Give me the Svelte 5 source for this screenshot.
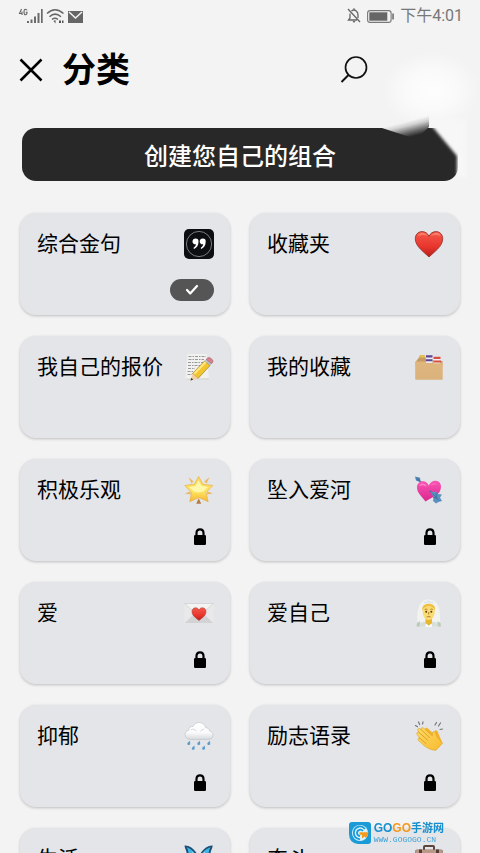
<script lang="ts">
	type Card = { label: string; icon: string; state?: 'selected' | 'locked' };

	const cards: Card[] = [
		{ label: '综合金句', icon: 'quote', state: 'selected' },
		{ label: '收藏夹', icon: 'heart' },
		{ label: '我自己的报价', icon: 'memo' },
		{ label: '我的收藏', icon: 'dividers' },
		{ label: '积极乐观', icon: 'star', state: 'locked' },
		{ label: '坠入爱河', icon: 'cupid', state: 'locked' },
		{ label: '爱', icon: 'letter', state: 'locked' },
		{ label: '爱自己', icon: 'person', state: 'locked' },
		{ label: '抑郁', icon: 'rain', state: 'locked' },
		{ label: '励志语录', icon: 'clap', state: 'locked' },
		{ label: '生活', icon: 'butterfly', state: 'locked' },
		{ label: '奋斗', icon: 'briefcase', state: 'locked' }
	];
</script>

{#snippet icon(name: string)}
	<svg class="icon" viewBox="0 0 30 30" aria-hidden="true">
		{#if name === 'quote'}
			<rect width="30" height="30" rx="5" fill="#0d0e12" />
			<circle cx="15" cy="15" r="12.6" fill="none" stroke="#a9a9ad" stroke-width=".7" />
			<path fill="#fff" d="M11.5 9.5a3 3 0 0 1 3 3.2c0 3.6-1.7 6-4.4 7.3l-.7-1.1c1.6-1 2.4-2.1 2.6-3.6-2 .3-3.5-.9-3.5-2.8 0-1.7 1.3-3 3-3z" />
			<path fill="#fff" d="M18.7 9.5a3 3 0 0 1 3 3.2c0 3.6-1.7 6-4.4 7.3l-.7-1.1c1.6-1 2.4-2.1 2.6-3.6-2 .3-3.5-.9-3.5-2.8 0-1.7 1.3-3 3-3z" />
		{:else if name === 'heart'}
			<path fill="url(#red)" stroke="#8e2a22" stroke-width=".8" d="M15 28C10 23 1.300 17.500 1.300 9.800c0-4.300 2.900-7.200 6.600-7.200 3.300 0 5.900 1.800 7.100 4.700 1.200-2.900 3.800-4.700 7.100-4.700 3.700 0 6.600 2.900 6.600 7.200C28.700 17.500 20 23 15 28z" />
			<path fill="#ff8b78" opacity=".7" d="M3.500 7.500C4.500 4.500 6.500 3.500 9 3.800c2.500.4 4 2 4.500 3.200-3-1.500-6.500-1.500-10 .5zM17 7c1-2 3-3.300 5.500-3.200 2 .1 3.800 1.400 4.300 3.500C24 5.800 20.500 5.600 17 7z" />
		{:else if name === 'memo'}
			<path fill="#f1f1ef" d="M3.500 2H23l2 26H1.500z" />
			<path fill="#dcdcda" d="M1.600 26.500 25 26l.2 2H1.500z" />
			<path stroke="#98989c" stroke-width="1" stroke-dasharray="3 1 1.500 1" fill="none" d="M4.500 4.500H22M4.500 7.500H20M4 10.500H19M4 13.500H16M4 16.500H11M3.500 19.500H9M3.500 22.500H8" />
			<path fill="#f3c52d" stroke="#8c6b18" stroke-width=".6" d="m8.500 21.500 12-12.500 5.500 4.500-12 13z" />
			<path fill="#ffe882" d="m9.500 21 11.500-11.800 1.600 1.300L11 22.500z" />
			<path fill="#f0cfa0" d="m8.500 21.500 5.500 5-7.500 2z" />
			<path fill="#3b3326" d="m7.300 25.800 1.800 2-2.600.7z" />
			<path fill="#b9bcc0" d="m20.500 9 1.700-1.800 5.400 4.500L26 13.500z" />
			<path fill="#d9808a" stroke="#96545c" stroke-width=".5" d="m22.200 7.200 1.600-1.500c2-.9 5.900 2.200 5.100 4.300l-1.300 1.700z" />
		{:else if name === 'dividers'}
			<path fill="#c69a60" d="M1.500 10 5 5.500l1-2.300h4.500L12 7l16.500 2v5h-27z" />
			<path fill="#e6c14e" d="M6 3.200h4.500l.6 2.300H5.300z" />
			<path fill="#f0eef5" d="M12 3.200h6.500V11H12zM19.500 4.500h7V12h-7z" />
			<path fill="#5a4694" d="M12 3.200h6.500v2.300H12zM12 7.300h6.500v2H12z" />
			<path fill="#d8503c" d="M19.500 4.700h7v2.300h-7zM19.500 8.500h7.500v2h-7.500z" />
			<path fill="url(#tan)" d="M1.200 9.500h10l2 1.800h15.500V27q0 .7-.7.7H2q-.8 0-.8-.7z" />
		{:else if name === 'star'}
			<path fill="#edb75a" d="m4.500 2 5 4.500-2 2zM25.500 2l-5.200 4.500 2.200 2zM.8 18.500l5.500-2 .5 3zM28.900 18.500l-5.500-2-.5 3z" />
			<path fill="#b77b42" d="m14.700 23.200 2.500 5.500h-5z" />
			<path fill="url(#gold)" stroke="#e5a83a" stroke-width=".6" stroke-linejoin="round" d="m14.600 1.500 4.400 7.800 9.800 1.200-6.800 7 2.200 9.200-9.400-4.200-9 4.200 1.700-9.300L.8 10.500l9.700-1.400z" />
			<path fill="#fff9b4" opacity=".9" d="m14.500 5.500 3.200 5.500 6.300 1-5 4.500-4.300 1-4.800-1-5-4.500 6.700-1z" />
		{:else if name === 'cupid'}
			<path fill="#4d86b8" d="m1 1.500 5 1.300.6 4.500L2 5.500z" />
			<path stroke="#4b7298" stroke-width="1.400" d="M3 3.500 24 23.500" />
			<path fill="url(#pink)" d="M11.500 26.500C8 21.500 2.500 18 3 11.500 3.500 7.500 7.300 5.300 10.700 6.500c2 .7 3.400 2 4 4 1.800-3.800 5.300-5.500 8.500-4.400 3.300 1.100 4.600 4.900 3.300 8.700C24.500 21 16.500 23 11.500 26.500z" />
			<path fill="#ff94d0" opacity=".8" d="M5 11c1-2.300 3-3.200 5.500-2 1.200.7 2 1.700 2.300 2.800C10.500 10 8 9.700 5 11zM16.500 10.800c1.500-2.300 4.500-3 6.800-1.300-2.500-.4-4.800.1-6.800 1.300z" />
			<path stroke="#4b7298" stroke-width="1.200" d="m15.500 15.500 8 8" />
			<path fill="#5a91c0" d="m17 17 5-.5 1.500 2.500 4.500.5-2 2.900L28 26l-3.500 1-2.500 1.500-3-2.500.5-3.500z" />
			<path stroke="#345f8e" stroke-width=".6" fill="none" d="m18.500 18.500 6.500 7M22 18l.5 4.500M19 22.500l4 .5" />
		{:else if name === 'letter'}
			<path fill="#e9e9ea" d="M.7 5.500h28.600V25H.7z" />
			<path fill="#d3d3d6" d="m.7 25 10.500-10h7.600l10.500 10z" />
			<path fill="#f4f4f4" stroke="#c8c8ca" stroke-width=".6" d="M.7 5.500h28.600L15 18.500z" />
			<path fill="url(#red)" stroke="#a73d34" stroke-width=".5" d="M15 22.500c-3.500-3-7-5-7-8.800 0-2.400 1.500-4 3.600-4 1.600 0 2.800.9 3.400 2.300.6-1.400 1.800-2.300 3.400-2.300 2.100 0 3.600 1.600 3.600 4 0 3.800-3.500 5.800-7 8.800z" />
		{:else if name === 'person'}
			<path fill="#f2f3ef" d="M3.500 27C2.500 12 4.500 1.500 14.500 1.500S27 12 25.800 27z" />
			<path fill="#d7dfda" d="M2.500 28.500C3 25 8 23.500 14.700 23.500S26 25 26.800 28.500z" />
			<path fill="#bccbb9" d="m3 25 3-2-.5 5.500H2.500zM26.500 25l-3-2 .5 5.500h3z" />
			<path fill="#e8b72f" d="M11.500 19h6.500v6.500l-3.300 2-3.200-2z" />
			<ellipse cx="14.700" cy="14.500" rx="6" ry="7.500" fill="#f9dc74" />
			<path fill="#f0bf3f" d="M8.400 13C7.500 8 10.500 5.700 14.700 5.700S21.900 8 21 13c-.8-3-3.300-4.500-6.300-5.200C11.700 8.500 9.200 10 8.400 13z" />
			<path fill="#d9e3ee" d="m9.500 5.500 1.200-2.100L12.500 4l2.200-2 2.100 2 1.900-.6 1.200 2.100-5.200-.9z" />
			<circle cx="12.200" cy="13.700" r="1" fill="#54401c" />
			<circle cx="17.300" cy="13.700" r="1" fill="#54401c" />
			<path stroke="#a26b16" stroke-width=".8" fill="none" d="M10.700 11.500q1.500-.9 2.700 0M16.200 11.500q1.500-.9 2.700 0M14.700 14v2.500M12.700 19q2-1 4 0" />
			<path fill="#fff" d="M12 25.500 14.700 28l2.800-2.500.5 3.200h-6.500z" />
		{:else if name === 'rain'}
			<path fill="url(#cloud)" stroke="#c0c6cc" stroke-width=".7" d="M6.500 18.500C3.500 18.500 1 16.500 1 13.700c0-2.400 1.500-4 3.700-4.500C4.500 6.500 6.800 5 9 5.500 10.200 2.700 12.500 1.500 15.200 1.500c3.600 0 6 2.300 6.500 5.200 2.200.1 3.700 1.400 4 3.300 2 .6 3.300 2 3.300 4.200 0 2.700-2.300 4.300-5.300 4.300z" />
			<path stroke="#c9ced3" stroke-width=".8" fill="none" d="M7 8.700c1.700-1 4-.6 5.200 1.500M20 8q-2.500.3-3.300 2.500" />
			<g fill="#5a9dcc">
				<path d="M6 19.800c-.8 1.200-3 1.500-2.700 3.200.3 1.300 2.500 1.200 2.900 0z" />
				<path d="M16 19.800c-.8 1.200-3 1.500-2.700 3.200.3 1.300 2.500 1.200 2.900 0z" />
				<path d="M26 19.800c-.8 1.200-3 1.500-2.700 3.200.3 1.300 2.500 1.200 2.900 0z" />
				<path d="M10.500 24.500c-.8 1.200-3 1.500-2.700 3.200.3 1.300 2.500 1.200 2.900 0z" />
				<path d="M20.800 24.500c-.8 1.200-3 1.500-2.700 3.200.3 1.300 2.500 1.200 2.900 0z" />
			</g>
		{:else if name === 'clap'}
			<path stroke="#74767b" stroke-width="1.200" stroke-linecap="round" d="m1.500 4.500 2 1.200M4.500 1l1.200 2.500M9 .8 8.500 3M21 4 22.500 1.500M24.500 5l2-3M26 8.500l2.500-.5" />
			<path fill="#f3b229" d="M11 7.500c1-1.300 2.600-.4 3.500.6l6 5.400c.5-1.300-.7-3.300 1-4.200 1.800-.3 2.500 1.700 3.500 4.700l3.500 8-6.500 6.500-8-7z" />
			<path fill="url(#skin)" stroke="#dba025" stroke-width=".6" d="M3 13.500c-1-1.500.8-3 2-2L4 9.500C3.200 8 5 6.700 6.300 7.800L7 8.500C6.700 6.700 8.500 6 9.700 7.200l8.600 7.700c.5-1.500-.5-4.100 1.400-4.500 1.700 0 2.300 2.500 3 5l5.800 6.800-6.500 7.100c-4 0-8.500-1.800-12-4.800L4.500 19.500c-1.500-1.400.2-3 1.500-2.200z" />
			<path stroke="#d5951d" stroke-width=".8" stroke-linecap="round" fill="none" d="m5 11.500 8.500 7.500M7 8.500l8.500 8M5.500 17l6.500 5.500" />
		{:else if name === 'butterfly'}
			<path fill="#1d4f75" d="M14.500 13C12 6 6 1 .5 1.500c.2 3 2 5 2.200 8 .3 4 3.200 6.500 7 7L7 22l5 5 2.500-7 2.500 7 5-5-2.500-5.500c4-.5 6.700-3 7-7 .2-3 2-5 2.200-8C23.500 1 17.500 6 14.500 13z" />
			<path fill="#41b5e4" d="M13 13C10.500 8 7 4.500 2.700 3.200c1.300 2 1.600 4 1.800 6.200.4 3 3 4.700 6.500 5.100zM16 13c2.500-5 6-8.500 10.500-9.800-1.300 2-1.600 4-1.800 6.200-.4 3-3 4.700-6.500 5.100zM12 17l-3 4.700 3 2.600zM17 17l3 4.700-3 2.600z" />
			<path fill="#92e1f5" d="M8 7.500c2 2 3.200 3.600 4 5.500-3-1-4.500-2.500-4-5.500zM21 7.500c-2 2-3.200 3.600-4 5.500 3-1 4.500-2.500 4-5.500z" />
		{:else}
			<path stroke="#5a443b" stroke-width="2" fill="none" d="M10 6V3q0-1 1-1h8q1 0 1 1v3" />
			<rect x="1" y="5.500" width="28" height="22" rx="2" fill="#97796b" />
			<path fill="#b99a89" d="M1.500 8q0-2 2-2h23q2 0 2 2v1h-27z" />
			<path fill="#513e37" d="M5 5.500h3V9H5zM22 5.500h3V9h-3zM1 14h28v1.500H1z" />
		{/if}
	</svg>
{/snippet}

<svg class="defs" aria-hidden="true">
	<defs>
		<linearGradient id="red" x2="0" y2="1"><stop stop-color="#f4594a" /><stop offset=".6" stop-color="#e8352d" /><stop offset="1" stop-color="#b81f1c" /></linearGradient>
		<linearGradient id="pink" x2="0" y2="1"><stop stop-color="#fb55b4" /><stop offset="1" stop-color="#d9268e" /></linearGradient>
		<linearGradient id="gold" x2="0" y2="1"><stop stop-color="#fbd85c" /><stop offset=".6" stop-color="#fde45f" /><stop offset="1" stop-color="#f5b435" /></linearGradient>
		<linearGradient id="tan" x2="0" y2="1"><stop stop-color="#e0b67e" /><stop offset="1" stop-color="#dbb27c" /></linearGradient>
		<linearGradient id="cloud" x2="0" y2="1"><stop stop-color="#fff" /><stop offset=".6" stop-color="#fafafa" /><stop offset="1" stop-color="#d5d8dc" /></linearGradient>
		<linearGradient id="skin" x2="1" y2="1"><stop stop-color="#ffda65" /><stop offset="1" stop-color="#f7bb2e" /></linearGradient>
	</defs>
</svg>

<main class="screen">
	<div class="status">
		<svg width="68" height="17" viewBox="0 0 68 17" aria-label="4G">
			<path fill="none" stroke="#666" stroke-width="1.1" d="M3.500 1 1.500 5.500h3M4 3.500V7M9 2.300Q8.700 1.200 7.500 1.200 6 1.200 6 4t1.500 2.800Q9 6.800 9 4.300H7.700" />
			<path fill="#6a6a6a" d="M9 13h2v2H9zM12.500 11.500h2V15h-2zM16 8.500h2V15h-2zM19.500 5h2v10h-2zM23 1h1.700v14H23z" />
			<path fill="none" stroke="#666" stroke-width="1.500" d="M29 5.500Q37-2 45.500 5.500M31.500 8.700Q37 3.500 43 8.700M34 11.500q3-2.500 6 0" />
			<path fill="#555" d="m35.500 13 2-1v3.500zM41 12.500h2V15h-2zM44 12.500h1.500V15H44z" />
			<path fill="#666" d="M50 3h15v12H50z" />
			<path fill="none" stroke="#f3f3f3" stroke-width="1.500" d="m51 4 6.500 6L64 4" />
		</svg>
		<div class="status-group">
			<svg width="14" height="16" viewBox="0 0 14 16" aria-label="静音">
				<path fill="none" stroke="#666" stroke-width="1.300" d="m1 1 12 13M4.500 3Q7 1 9.500 3.200 11 4.500 11 7v3M3 5.500V10l-1.500 2H10M7 .3v2" />
				<path fill="#666" d="M5.500 13h3L7 15z" />
			</svg>
			<svg width="27" height="13" viewBox="0 0 27 13" aria-label="电量">
				<rect x=".6" y=".6" width="23.500" height="11.800" rx="2.500" fill="none" stroke="#777" stroke-width="1.100" />
				<rect x="2.300" y="2.300" width="18" height="8.400" fill="#666" />
				<path fill="#666" d="M25.300 3.500h1.500v6h-1.500z" />
			</svg>
			<span class="time">下午4:01</span>
		</div>
	</div>

	<header class="header">
		<button class="plain" aria-label="关闭">
			<svg width="24" height="24" viewBox="0 0 24 24">
				<path stroke="#000" stroke-width="2.500" d="M1.500 1.500 22.500 22.500M22.500 1.500 1.500 22.500" />
			</svg>
		</button>
		<h1>分类</h1>
		<button class="plain search" aria-label="搜索">
			<svg width="28" height="28" viewBox="0 0 28 28">
				<circle cx="16" cy="11.500" r="10.500" fill="none" stroke="#111" stroke-width="1.700" />
				<path stroke="#111" stroke-width="2" d="M8.500 19 1.500 26" />
			</svg>
		</button>
	</header>

	<div class="create-wrap">
		<button class="create">创建您自己的组合</button>
		<!-- soft highlight folded over the right corner -->
		<svg class="glow" viewBox="382 52 98 130" aria-hidden="true">
			<defs>
				<filter id="soft" x="-20%" y="-20%" width="140%" height="140%"><feGaussianBlur stdDeviation="1.500" /></filter>
				<radialGradient id="halo">
					<stop stop-color="#fdfdfd" />
					<stop offset=".5" stop-color="#fafafa" />
					<stop offset="1" stop-color="#f3f3f3" />
				</radialGradient>
				<linearGradient id="fade" gradientUnits="userSpaceOnUse" x1="406" y1="121" x2="410" y2="137">
					<stop stop-color="#f8f8f8" />
					<stop offset=".3" stop-color="#d0d0d0" />
					<stop offset=".7" stop-color="#6a6a6a" />
					<stop offset="1" stop-color="#282828" />
				</linearGradient>
			</defs>
			<path fill="url(#halo)" d="M382 52h98v76h-98z" />
			<path fill="#f7f7f7" filter="url(#soft)" d="M431 125 457 156 457 175 466 178 466 120 431 118z" />
			<path fill="url(#fade)" d="M382 128 429 115 429 127 416 139z" />
		</svg>
	</div>

	<div class="grid">
		{#each cards as card}
			<button class="card">
				<span class="row">
					<span class="label">{card.label}</span>
					{@render icon(card.icon)}
				</span>
				{#if card.state === 'selected'}
					<span class="pill">
						<svg width="14" height="12" viewBox="0 0 14 12" aria-label="已选">
							<path fill="none" stroke="#fff" stroke-width="2.200" stroke-linecap="round" stroke-linejoin="round" d="m2 6 3.200 3.500L12 2" />
						</svg>
					</span>
				{:else if card.state === 'locked'}
					<svg class="lock" width="12" height="17" viewBox="0 0 12 17" aria-label="未解锁">
						<path fill="none" stroke="#000" stroke-width="2.200" d="M2.500 8V5Q2.500 1.300 6 1.300T9.500 5v3" />
						<rect y="7" width="12" height="10" rx="1.200" />
					</svg>
				{/if}
			</button>
		{/each}
	</div>

	<div class="brand">
		<svg width="22" height="22" viewBox="0 0 22 22" aria-hidden="true">
			<path fill="#1a9bd7" d="M3 0h16q3 0 3 3v16q0 3-3 3H9Q0 21 0 12V3q0-3 3-3z" />
			<circle cx="11" cy="11" r="8" fill="#d9f2fb" />
			<path fill="none" stroke="#1a9bd7" stroke-width="1.800" d="M16 7Q13.500 4 10 4.500 5 5.500 4.800 11 5 16.500 11 17.300M14 9Q12.500 7.300 10.500 7.800 8 8.500 8 11t3 3.200" />
			<path fill="#f49a1e" d="M10.500 10.300h9q-.3 3.500-2.500 5.700l-1.500-1.500-2.500 2v-3.800h-2.500z" />
		</svg>
		<div>
			<div class="brand-name"><span class="blue">GO</span><span class="orange">GO</span><span class="cn">手游网</span></div>
			<div class="brand-url">WWW.GOGOGO.CN</div>
		</div>
	</div>
</main>

<style>
	:global(body) {
		margin: 0;
		background: #f3f3f3;
	}

	.screen {
		display: flex;
		flex-direction: column;
		height: 100vh;
		overflow: hidden;
		background: #f3f3f3;
		color: #000;
		font-family: Roboto, 'Noto Sans CJK SC', sans-serif;
	}

	button {
		font: inherit;
		color: inherit;
		border: none;
		padding: 0;
		cursor: pointer;
	}

	svg {
		display: block;
		flex: none;
	}

	.defs {
		position: absolute;
		width: 0;
		height: 0;
	}

	.status {
		display: flex;
		flex: none;
		justify-content: space-between;
		align-items: center;
		height: 32px;
		padding: 0 17px 0 18px;
	}

	.status-group {
		display: flex;
		align-items: center;
		gap: 6px;
	}

	.time {
		font-size: 16px;
		line-height: 20px;
		color: #777;
	}

	.header {
		display: flex;
		flex: none;
		align-items: center;
		height: 76px;
		padding: 0 112px 0 19px;
	}

	.plain {
		background: none;
	}

	h1 {
		margin: 0 0 0 19px;
		font-size: 34px;
		line-height: 44px;
		font-weight: 700;
	}

	.search {
		margin-left: auto;
	}

	.create-wrap {
		position: relative;
		flex: none;
		margin: 20px 22px 0;
	}

	.create {
		display: block;
		width: 100%;
		height: 53px;
		border-radius: 14px;
		background: #282828;
		color: #fff;
		font-size: 24px;
		font-weight: 500;
	}

	.glow {
		position: absolute;
		right: -22px;
		top: -76px;
		width: 98px;
		height: 130px;
		pointer-events: none;
	}

	.grid {
		display: grid;
		flex: 1;
		min-height: 0;
		grid-template-columns: 1fr 1fr;
		grid-auto-rows: 102px;
		gap: 21px 20px;
		padding: 32px 20px 0;
		overflow: hidden;
	}

	.card {
		display: flex;
		flex-direction: column;
		align-items: stretch;
		justify-content: space-between;
		padding: 16px 16px 14px 17px;
		border-radius: 16px;
		background: #e4e5e9;
		box-shadow: 0 1px 3px rgba(0, 0, 0, 0.22);
		text-align: left;
	}

	.row {
		display: flex;
		justify-content: space-between;
		align-items: center;
	}

	.label {
		font-size: 21px;
		line-height: 30px;
	}

	.icon {
		width: 30px;
		height: 30px;
	}

	.pill {
		display: flex;
		align-self: flex-end;
		align-items: center;
		justify-content: center;
		width: 44px;
		height: 22px;
		border-radius: 11px;
		background: #555;
	}

	.lock {
		align-self: flex-end;
		margin: 0 8px 2px 0;
	}

	.brand {
		position: fixed;
		right: 36px;
		bottom: 8px;
		display: flex;
		align-items: center;
		gap: 3px;
	}

	.brand-name {
		display: flex;
		align-items: center;
		height: 14px;
		font-family: 'Liberation Sans', 'Noto Sans CJK SC', sans-serif;
		font-size: 12px;
		line-height: 14px;
		font-weight: 700;
	}

	.blue,
	.cn {
		color: #168fd0;
	}

	.orange {
		color: #f39a1c;
	}

	.cn {
		font-size: 11px;
	}

	.brand-url {
		font-family: 'Liberation Mono', monospace;
		font-size: 8px;
		line-height: 10px;
		color: #3fa3d6;
	}
</style>
